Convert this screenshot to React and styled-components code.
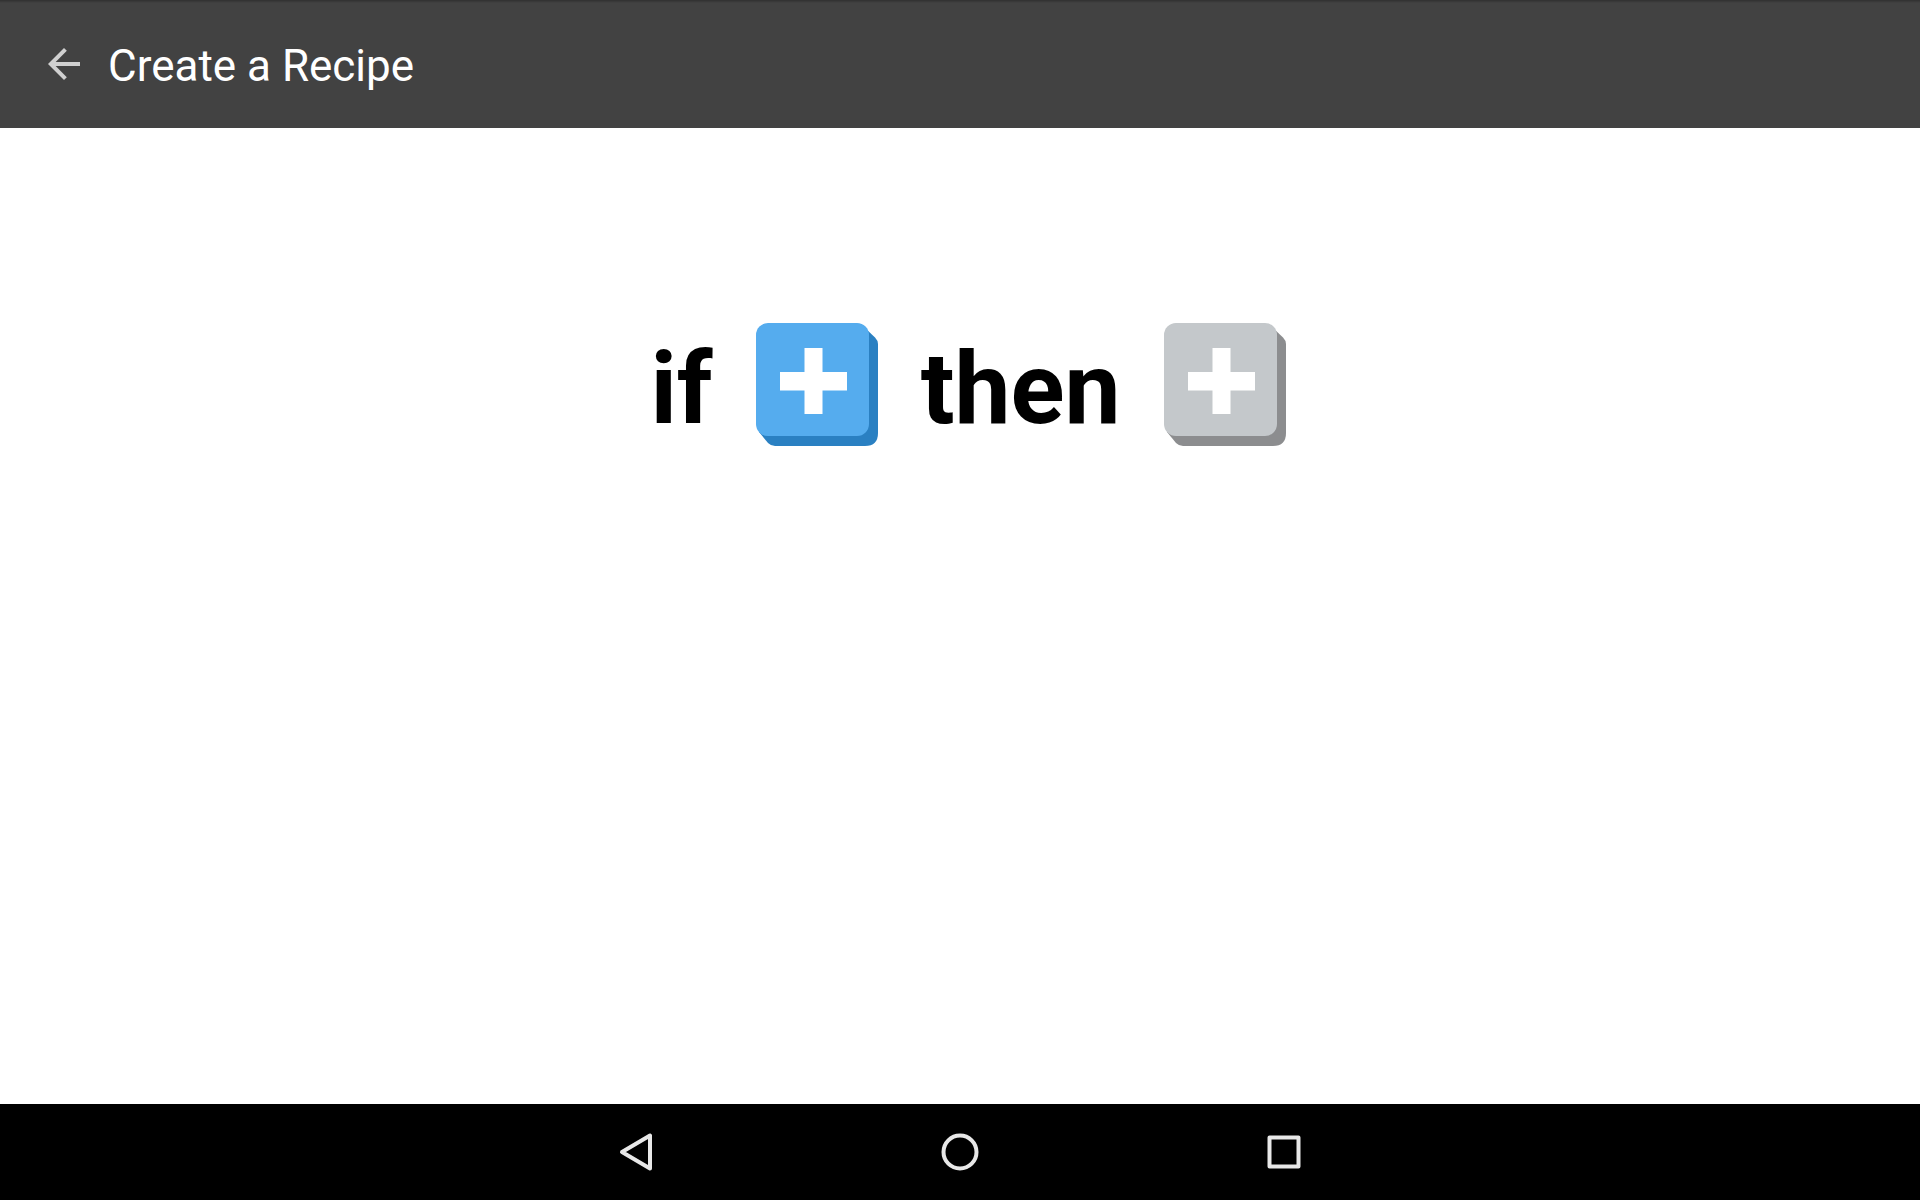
import React from "react";
import styled, { createGlobalStyle } from "styled-components";

const GlobalStyle = createGlobalStyle`
  *, *::before, *::after { box-sizing: border-box; }
  body {
    margin: 0;
    background: #fff;
    font-family: Roboto, "Liberation Sans", sans-serif;
  }
`;

const Screen = styled.div`
  display: flex;
  flex-direction: column;
  min-height: 100vh;
`;

const Toolbar = styled.header`
  display: flex;
  align-items: center;
  gap: 20px;
  height: 128px;
  padding: 0 40px;
  background: linear-gradient(#303030, #424242 3px);
`;

const IconButton = styled.button`
  display: flex;
  align-items: center;
  justify-content: center;
  padding: 0;
  border: 0;
  background: transparent;
  color: #d0d0d0;
  cursor: pointer;
`;

const Title = styled.h1`
  margin: 0;
  padding-top: 4px;
  color: #fff;
  font-size: 44px;
  font-weight: 400;
  line-height: 52px;
`;

const Main = styled.main`
  flex: 1;
  padding: 191px 0 0 16px;
`;

const Recipe = styled.div`
  display: flex;
  align-items: center;
  justify-content: center;
  gap: 43px;
`;

const Word = styled.span`
  padding-top: 10px;
  color: #000;
  font-size: 100px;
  font-weight: 700;
  line-height: 120px;
`;

const TileButton = styled(IconButton)`
  padding-top: 1px;
  cursor: ${(p) => (p.disabled ? "default" : "pointer")};
`;

const NavBar = styled.nav`
  display: flex;
  justify-content: center;
  height: 96px;
  background: #000;
`;

const NavButton = styled(IconButton)`
  width: 324px;
  color: #e8e8e8;
`;

function PlusTile({ label, face, side, disabled }) {
  return (
    <TileButton type="button" aria-label={label} disabled={disabled}>
      <svg width="122" height="123" viewBox="0 0 122 123" aria-hidden="true">
        <path
          d="M108 4 L119 14.5 Q122 17.5 122 21 V110 Q122 123 109 123 H19 Q15 123 12 120 L3 109 Z"
          fill={side}
        />
        <rect width="113" height="113" rx="12" fill={face} />
        <path d="M48.5 25H66.5V49H91V67.5H66.5V91H48.5V67.5H24V49H48.5Z" fill="#fff" />
      </svg>
    </TileButton>
  );
}

export default function App() {
  return (
    <>
      <GlobalStyle />
      <Screen>
        <Toolbar>
          <IconButton type="button" aria-label="Back">
            <svg width="48" height="48" viewBox="0 0 24 24" fill="currentColor" aria-hidden="true">
              <path d="M20 11H7.83l5.59-5.59L12 4l-8 8 8 8 1.41-1.41L7.83 13H20v-2z" />
            </svg>
          </IconButton>
          <Title>Create a Recipe</Title>
        </Toolbar>
        <Main>
          <Recipe>
            <Word>if</Word>
            <PlusTile label="Add trigger" face="#55acee" side="#2a80c2" />
            <Word>then</Word>
            <PlusTile label="Add action" face="#c4c8cb" side="#8c8d8f" disabled />
          </Recipe>
        </Main>
        <NavBar>
          <NavButton type="button" aria-label="System back">
            <svg width="40" height="40" viewBox="0 0 40 40" fill="none" stroke="currentColor" strokeWidth="4" strokeLinejoin="round" aria-hidden="true">
              <path d="M34 3.5V36.5L6 20Z" />
            </svg>
          </NavButton>
          <NavButton type="button" aria-label="Home">
            <svg width="40" height="40" viewBox="0 0 40 40" fill="none" stroke="currentColor" strokeWidth="4" aria-hidden="true">
              <circle cx="20" cy="20" r="16.5" />
            </svg>
          </NavButton>
          <NavButton type="button" aria-label="Recent apps">
            <svg width="40" height="40" viewBox="0 0 40 40" fill="none" stroke="currentColor" strokeWidth="4" strokeLinejoin="round" aria-hidden="true">
              <rect x="5.5" y="5.5" width="29" height="29" />
            </svg>
          </NavButton>
        </NavBar>
      </Screen>
    </>
  );
}
